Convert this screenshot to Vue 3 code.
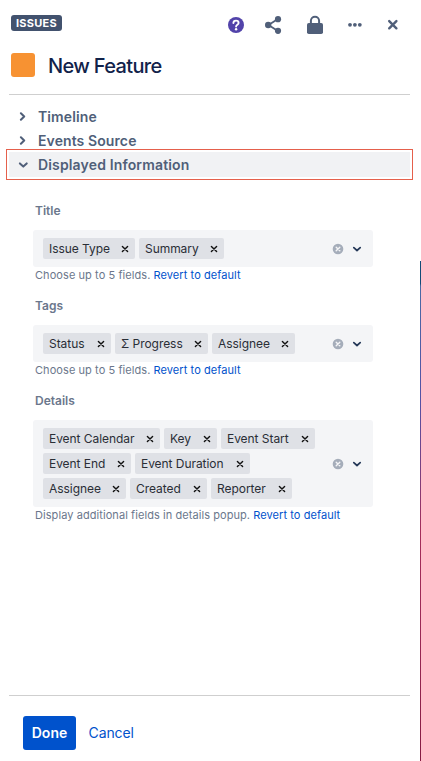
<script setup>
const sections = [
  { name: 'Timeline', open: false },
  { name: 'Events Source', open: false },
  { name: 'Displayed Information', open: true },
]
const fields = [
  {
    label: 'Title',
    hint: 'Choose up to 5 fields.',
    tags: [['Issue Type', 92], ['Summary', 85]],
  },
  {
    label: 'Tags',
    hint: 'Choose up to 5 fields.',
    tags: [['Status', 68], ['Σ Progress', 93], ['Assignee', 83]],
  },
  {
    label: 'Details',
    hint: 'Display additional fields in details popup.',
    tags: [
      ['Event Calendar', 117], ['Key', 53], ['Event Start', 94],
      ['Event End', 88], ['Event Duration', 115],
      ['Assignee', 83], ['Created', 77], ['Reporter', 81],
    ],
  },
]
</script>

<template>
  <div class="panel">
    <header class="top">
      <span class="badge">ISSUES</span>
      <nav class="actions">
        <svg class="help" width="18" height="18" viewBox="0 0 18 18">
          <circle cx="9" cy="9" r="8" fill="#5243aa" />
          <path d="M6.4 7.1C6.4 5.5 7.5 4.6 9 4.6s2.6.9 2.6 2.3c0 1.7-2.5 1.8-2.5 3.6" fill="none" stroke="#fff" stroke-width="1.9" stroke-linecap="round" />
          <circle cx="9.1" cy="13.2" r="1.2" fill="#fff" />
        </svg>
        <svg class="share" width="18" height="20" viewBox="0 0 18 20">
          <path d="M13.5 4.3L4.5 10l9 5.7" fill="none" stroke="#505f79" stroke-width="1.8" />
          <g fill="#505f79"><circle cx="14" cy="4.2" r="3.1" /><circle cx="4.2" cy="10" r="3.2" /><circle cx="14" cy="15.8" r="3.1" /></g>
        </svg>
        <svg class="lock" width="18" height="20" viewBox="0 0 18 20">
          <path d="M4.9 9V5.8a4.1 4.1 0 0 1 8.2 0V9" fill="none" stroke="#505f79" stroke-width="2" />
          <rect x="1" y="8" width="16" height="11" rx="1.8" fill="#505f79" />
        </svg>
        <svg class="more" width="18" height="18" viewBox="0 0 18 18" fill="#505f79">
          <circle cx="4" cy="8.8" r="1.9" /><circle cx="8.9" cy="8.8" r="1.9" /><circle cx="13.8" cy="8.8" r="1.9" />
        </svg>
        <svg width="18" height="18" viewBox="0 0 18 18">
          <path d="M5.2 5.1l7.2 7.2M12.4 5.1l-7.2 7.2" stroke="#505f79" stroke-width="2.4" stroke-linecap="round" />
        </svg>
      </nav>
    </header>

    <div class="heading">
      <span class="swatch"></span>
      <h1>New Feature</h1>
    </div>

    <div class="sections">
      <div v-for="s in sections" :key="s.name" class="section" :class="{ open: s.open }">
        <svg width="10" height="10" viewBox="0 0 10 10">
          <path :d="s.open ? 'M1.9 3.4L5.3 6.6l3.4-3.2' : 'M2.9 2.2l3.3 3.3-3.3 3.3'" fill="none" stroke="#505f79" stroke-width="2" stroke-linecap="round" stroke-linejoin="round" />
        </svg>
        <span>{{ s.name }}</span>
      </div>
    </div>

    <main class="fields">
      <section v-for="f in fields" :key="f.label" class="field">
        <label>{{ f.label }}</label>
        <div class="select">
          <div class="tags">
            <span v-for="[name, width] in f.tags" :key="name" class="tag" :style="{ width: width + 'px' }">
              {{ name }}
              <svg width="8" height="8" viewBox="0 0 8 8">
                <path d="M1.4 1.4l5.2 5.2M6.6 1.4L1.4 6.6" stroke="#111" stroke-width="1.4" stroke-linecap="round" />
              </svg>
            </span>
          </div>
          <svg class="clear" width="12" height="12" viewBox="0 0 12 12">
            <circle cx="6" cy="6" r="5.3" fill="#a5adba" />
            <path d="M4.2 4.2l3.6 3.6M7.8 4.2L4.2 7.8" stroke="#f4f5f7" stroke-width="1.4" stroke-linecap="round" />
          </svg>
          <svg width="10" height="10" viewBox="0 0 10 10">
            <path d="M1.8 3.6L5 6.5l3.2-2.9" fill="none" stroke="#253858" stroke-width="1.7" stroke-linecap="round" stroke-linejoin="round" />
          </svg>
        </div>
        <p>{{ f.hint }} <a>Revert to default</a></p>
      </section>
    </main>

    <footer>
      <button class="done">Done</button>
      <button class="cancel">Cancel</button>
    </footer>
    <i class="edge"></i>
  </div>
</template>

<style>
body {
  background: #fff;
}
</style>

<style scoped>
.panel {
  position: relative;
  box-sizing: border-box;
  width: 421px;
  height: 761px;
  display: flex;
  flex-direction: column;
  overflow: hidden;
  background: #fff;
  font-family: Inter, "Liberation Sans", sans-serif;
}
svg {
  display: block;
  flex: none;
}
.top {
  display: flex;
  justify-content: space-between;
  padding: 15px 19.5px 0 11px;
  height: 35px;
}
.badge {
  width: 51px;
  height: 16px;
  border-radius: 3px;
  background: #42526e;
  color: #fff;
  font-size: 11px;
  font-weight: 700;
  line-height: 16px;
  letter-spacing: 0.25px;
  text-align: center;
}
.actions {
  display: flex;
  align-items: center;
  height: 20px;
}
.help {
  margin-right: 19px;
}
.share {
  margin-right: 24px;
}
.lock {
  margin-right: 22px;
}
.more {
  margin-right: 19.5px;
}
.heading {
  display: flex;
  align-items: center;
  height: 30px;
  margin: 0 11px 0 9px;
  padding: 0 0 14px 2px;
  border-bottom: 1px solid #cfcfcf;
}
.swatch {
  width: 24px;
  height: 24px;
  border-radius: 3px;
  background: #f79232;
}
h1 {
  margin: 2px 0 0 13px;
  color: #11224a;
  font-size: 20px;
  font-weight: 500;
  line-height: 24px;
  letter-spacing: -0.65px;
}
.sections {
  padding: 9px 8px 0 6px;
}
.section {
  display: flex;
  align-items: center;
  gap: 10px;
  height: 24px;
  padding-left: 12px;
  color: #505f79;
  font-size: 14px;
  font-weight: 600;
  letter-spacing: 0.1px;
}
.section.open {
  box-sizing: border-box;
  height: 31px;
  margin-top: -3px;
  padding-left: 11px;
  border: 1px solid #e5604c;
  background: #f1f2f4;
  box-shadow: inset 0 0 0 2px #fff;
  letter-spacing: 0.15px;
}
.fields {
  padding: 23px 48px 0 33px;
  flex: 1;
}
.field {
  margin-bottom: 15px;
}
label {
  display: block;
  height: 16px;
  margin: 0 0 11px 2px;
  color: #6b778c;
  font-size: 12px;
  font-weight: 600;
  line-height: 16px;
}
.select {
  display: flex;
  align-items: center;
  padding: 8px 11px 8px 10px;
  border-radius: 3px;
  background: #f4f5f7;
}
.tags {
  display: flex;
  flex-wrap: wrap;
  gap: 4px;
  width: 284px;
}
.clear {
  margin: 0 8px 0 5px;
}
.tag {
  box-sizing: border-box;
  display: flex;
  align-items: center;
  justify-content: space-between;
  height: 21px;
  padding: 0 6px;
  border-radius: 2px;
  background: #dfe1e6;
  color: #2a2e36;
  font-size: 12px;
  letter-spacing: -0.05px;
  white-space: nowrap;
}
p {
  height: 16px;
  margin: 0 0 0 2px;
  color: #6b778c;
  font-size: 11px;
  line-height: 16px;
  letter-spacing: 0.07px;
  white-space: nowrap;
}
a {
  color: #0052cc;
}
footer {
  display: flex;
  align-items: center;
  gap: 12.5px;
  height: 34px;
  margin: 0 11px 0 9px;
  padding: 20px 14px 11px;
  border-top: 1px solid #cfcfcf;
}
button {
  height: 34px;
  padding: 0;
  border: 0;
  background: none;
  color: #0052cc;
  font: 400 14px/34px Inter, "Liberation Sans", sans-serif;
}
.cancel {
  letter-spacing: -0.1px;
}
.done {
  width: 53px;
  border-radius: 3px;
  background: #0052cc;
  color: #fff;
  font-weight: 600;
}
.edge {
  position: absolute;
  top: 261px;
  right: 0;
  bottom: 0;
  width: 1px;
  background: linear-gradient(#124b77 4.5%, #4a6aa5 5%, #5551a5 28%, #7a3f80 42%, #a52c5a 54%, #9a2855 75%, #851b42);
}
</style>
